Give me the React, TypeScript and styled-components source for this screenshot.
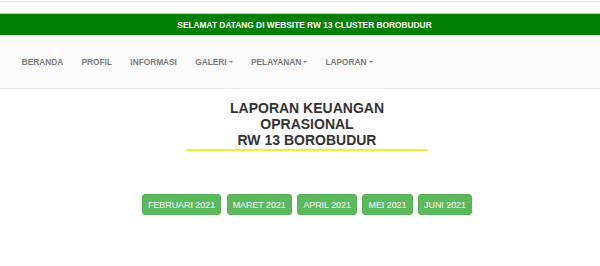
import styled, { createGlobalStyle } from 'styled-components'

const GlobalStyle = createGlobalStyle`
  html,
  body {
    margin: 0;
    padding: 0;
    background: #fff;
    font-family: 'Liberation Sans', Arial, sans-serif;
  }

  * {
    box-sizing: border-box;
  }
`

const TopRule = styled.div`
  margin-top: 1px;
  height: 12px;
  border-top: 1px solid #e6e6e6;
`

const WelcomeBar = styled.div`
  display: flex;
  align-items: center;
  justify-content: center;
  height: 22px;
  padding-left: 9px;
  border-top: 1px solid #a9d6a9;
  background-color: #008000;
  color: #fff;
  font-size: 8.35px;
  font-weight: 700;
`

const Navbar = styled.nav`
  display: flex;
  align-items: center;
  height: 54px;
  padding-left: 12.5px;
  background-color: #fbfbfb;
  border-bottom: 1px solid #ebebeb;
`

const NavList = styled.ul`
  display: flex;
  align-items: center;
  margin: 0;
  padding: 0;
  list-style: none;
`

const NavLink = styled.li`
  display: flex;
  align-items: center;
  padding: 0 9.2px;
  color: #7a7a7a;
  font-size: 8.3px;
  font-weight: 700;
  white-space: nowrap;
  cursor: pointer;
`

const Caret = styled.span`
  display: inline-block;
  width: 0;
  height: 0;
  margin-left: 2px;
  border-top: 2.5px solid #7a7a7a;
  border-left: 2.5px solid transparent;
  border-right: 2.5px solid transparent;
`

const Main = styled.main`
  padding: 11px 0 0 14px;
  text-align: center;
`

const Title = styled.h1`
  margin: 0;
  color: #333;
  font-size: 14px;
  font-weight: 700;
  line-height: 16px;
`

const Underline = styled.div`
  width: 242px;
  height: 2px;
  margin: 1px auto 0 auto;
  background-color: #e8ef3c;
  box-shadow: 0 0 1px #f2f6a0;
`

const ButtonRow = styled.div`
  display: flex;
  justify-content: center;
  gap: 5.3px;
  margin-top: 43px;
`

const MonthButton = styled.a`
  display: inline-flex;
  align-items: center;
  height: 21px;
  padding: 0 5.15px;
  border: 1px solid #55b355;
  border-radius: 3px;
  background-color: #5cb85c;
  color: #fff;
  font-size: 8.9px;
  text-decoration: none;
  white-space: nowrap;
  cursor: pointer;
`

const menu = [
  { label: 'BERANDA', dropdown: false },
  { label: 'PROFIL', dropdown: false },
  { label: 'INFORMASI', dropdown: false },
  { label: 'GALERI', dropdown: true },
  { label: 'PELAYANAN', dropdown: true },
  { label: 'LAPORAN', dropdown: true },
]

const months = ['FEBRUARI 2021', 'MARET 2021', 'APRIL 2021', 'MEI 2021', 'JUNI 2021']

const App = () => {
  return (
    <>
      <GlobalStyle />
      <TopRule />
      <WelcomeBar>SELAMAT DATANG DI WEBSITE RW 13 CLUSTER BOROBUDUR</WelcomeBar>
      <Navbar>
        <NavList>
          {menu.map((item) => (
            <NavLink key={item.label}>
              {item.label}
              {item.dropdown && <Caret />}
            </NavLink>
          ))}
        </NavList>
      </Navbar>
      <Main>
        <Title>
          LAPORAN KEUANGAN
          <br />
          OPRASIONAL
          <br />
          RW 13 BOROBUDUR
        </Title>
        <Underline />
        <ButtonRow>
          {months.map((month) => (
            <MonthButton key={month}>{month}</MonthButton>
          ))}
        </ButtonRow>
      </Main>
    </>
  )
}

export default App
